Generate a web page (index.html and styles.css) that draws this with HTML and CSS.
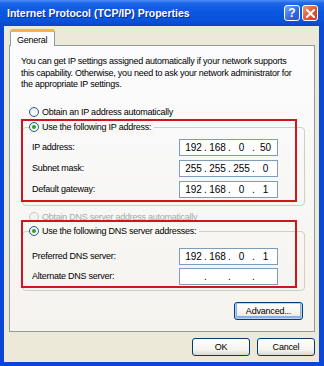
FILE: index.html
```html
<!DOCTYPE html>
<html lang="en">
<head>
  <meta charset="UTF-8">
  <title>Internet Protocol (TCP/IP) Properties</title>
  <link rel="stylesheet" href="styles.css">
</head>
<body>
  <div class="window">
    <div class="titlebar">
      <span class="title">Internet Protocol (TCP/IP) Properties</span>
      <div class="caption-btns">
        <span class="cbtn help">?</span>
        <span class="cbtn close">
          <svg width="9" height="9" viewBox="0 0 9 9"><path d="M1 1 L8 8 M8 1 L1 8" stroke="#fff" stroke-width="2" stroke-linecap="square"/></svg>
        </span>
      </div>
    </div>

    <div class="client">
      <div class="tabs">
        <span class="tab">General</span>
      </div>

      <div class="panel">
        <p class="intro">You can get IP settings assigned automatically if your network supports this capability. Otherwise, you need to ask your network administrator for the appropriate IP settings.</p>

        <div class="radio radio-top"><span class="dot"></span>Obtain an IP address automatically</div>

        <div class="group group-ip">
          <div class="radio legend checked"><span class="dot"></span>Use the following IP address:</div>
          <div class="row">
            <span class="label">IP address:</span>
            <div class="ipbox"><span>192</span><i>.</i><span>168</span><i>.</i><span>0</span><i>.</i><span>50</span></div>
          </div>
          <div class="row">
            <span class="label">Subnet mask:</span>
            <div class="ipbox"><span>255</span><i>.</i><span>255</span><i>.</i><span>255</span><i>.</i><span>0</span></div>
          </div>
          <div class="row">
            <span class="label">Default gateway:</span>
            <div class="ipbox"><span>192</span><i>.</i><span>168</span><i>.</i><span>0</span><i>.</i><span>1</span></div>
          </div>
          <div class="mark mark-ip"></div>
        </div>

        <div class="radio radio-dns disabled"><span class="dot"></span>Obtain DNS server address automatically</div>

        <div class="group group-dns">
          <div class="radio legend checked"><span class="dot"></span>Use the following DNS server addresses:</div>
          <div class="row">
            <span class="label">Preferred DNS server:</span>
            <div class="ipbox"><span>192</span><i>.</i><span>168</span><i>.</i><span>0</span><i>.</i><span>1</span></div>
          </div>
          <div class="row">
            <span class="label">Alternate DNS server:</span>
            <div class="ipbox"><span></span><i>.</i><span></span><i>.</i><span></span><i>.</i><span></span></div>
          </div>
          <div class="mark mark-dns"></div>
        </div>

        <div class="panel-foot">
          <button class="btn btn-adv">Advanced...</button>
        </div>
      </div>

      <div class="dialog-btns">
        <button class="btn btn-dlg">OK</button>
        <button class="btn btn-dlg">Cancel</button>
      </div>
    </div>
  </div>
</body>
</html>
```

FILE: styles.css
```css
* {
  box-sizing: border-box;
}

body {
  margin: 0;
  font-family: "Liberation Sans", Arial, sans-serif;
  font-size: 9px;
  letter-spacing: -0.25px;
  color: #000;
  background: #fff;
}

.window {
  width: 324px;
  height: 366px;
  display: flex;
  flex-direction: column;
  background: #0a47d6;
}

/* title bar */
.titlebar {
  height: 26px;
  display: flex;
  align-items: center;
  justify-content: space-between;
  padding: 0 6px 0 7px;
  background: linear-gradient(#4f8ef5 0%, #1c66e8 12%, #0a58e0 45%, #0a52da 80%, #0a46c8 100%);
}

.title {
  color: #fff;
  font-weight: bold;
  font-size: 10.5px;
  letter-spacing: 0;
  text-shadow: 1px 1px 0 #0a2a8a;
}

.caption-btns {
  display: flex;
  gap: 2px;
}

.cbtn {
  width: 16px;
  height: 16px;
  border: 1px solid #fff;
  border-radius: 3px;
  display: flex;
  align-items: center;
  justify-content: center;
  color: #fff;
  font-weight: bold;
  font-size: 12px;
  letter-spacing: 0;
}

.help {
  background: linear-gradient(135deg, #7aa8fa, #2f67e6 60%, #1f55d6);
}

.close {
  background: linear-gradient(135deg, #f09a78, #e0552e 55%, #c8401e);
}

/* client area */
.client {
  flex: 1;
  margin: 0 5px 4px 4px;
  padding: 3px 4px 5px 5px;
  background: #ece9d8;
  display: flex;
  flex-direction: column;
}

.tabs {
  display: flex;
  padding-left: 1px;
}

.tab {
  height: 17px;
  padding: 2px 7px 0 6px;
  margin-bottom: -1px;
  border: 1px solid #919b9c;
  border-bottom: none;
  border-top: 3px solid #f3b33c;
  border-radius: 3px 3px 0 0;
  background: #fcfcfe;
  position: relative;
  line-height: 12px;
}

.panel {
  height: 287px;
  border: 1px solid #919b9c;
  background: linear-gradient(#fcfcfe, #f4f3ee);
  padding: 10px 10px 0 11px;
  display: flex;
  flex-direction: column;
}

.intro {
  margin: 0;
  line-height: 11.5px;
  width: 276px;
}

/* radios */
.radio {
  display: flex;
  align-items: center;
  height: 14px;
  gap: 3px;
}

.dot {
  width: 10px;
  height: 10px;
  border: 1px solid #2a5a8a;
  border-radius: 50%;
  background: radial-gradient(circle at 60% 60%, #fff, #e4e2d8);
  position: relative;
}

.checked .dot::after {
  content: "";
  position: absolute;
  left: 2px;
  top: 2px;
  width: 4px;
  height: 4px;
  border-radius: 50%;
  background: #2aa22a;
}

.disabled {
  color: #aca899;
}

.disabled .dot {
  border-color: #cac8bb;
  background: #f4f3ee;
}

.radio-top {
  margin: 14px 0 0 8px;
}

.radio-dns {
  margin: 4px 0 0 8px;
}

/* group boxes */
.group {
  position: relative;
  margin-left: 1px;
  width: 283px;
  border: 1px solid #d0d0bf;
  border-radius: 4px;
  padding: 0 0 0 9px;
}

.group-ip {
  margin-top: 8px;
  height: 79px;
}

.group-dns {
  margin-top: 7px;
  height: 60px;
}

.legend {
  margin: -8px 0 0 -3px;
  padding-right: 3px;
  background: #f8f7f3;
  width: max-content;
}

.row {
  display: flex;
  align-items: center;
  justify-content: space-between;
  width: 246px;
  height: 17px;
  margin-top: 4px;
}

.group-ip .legend + .row {
  margin-top: 5px;
}

.group-dns .legend + .row {
  margin-top: 10px;
}

.group-dns .row {
  margin-top: 3px;
}

.ipbox {
  width: 99px;
  height: 17px;
  border: 1px solid #7f9db9;
  background: #fff;
  display: flex;
  align-items: center;
  padding-left: 4px;
  font-size: 10px;
  letter-spacing: 0;
}

.ipbox span {
  width: 19px;
  text-align: center;
}

.ipbox i {
  font-style: normal;
  width: 5px;
  text-align: center;
}

/* red annotation boxes */
.mark {
  position: absolute;
  border: 2px solid #d3141c;
  pointer-events: none;
}

.mark-ip {
  left: -2px;
  right: 7px;
  top: -9px;
  bottom: 3px;
}

.mark-dns {
  left: -2px;
  right: 7px;
  top: -12px;
  bottom: 2px;
}

/* buttons */
.btn {
  font-family: inherit;
  font-size: 9px;
  letter-spacing: -0.2px;
  color: #000;
  height: 18px;
  padding: 0;
  border: 1px solid #003c74;
  border-radius: 3px;
  background: linear-gradient(#fff, #f3f2ec 70%, #dcd8cc);
}

.panel-foot {
  display: flex;
  justify-content: flex-end;
  margin-top: auto;
  padding: 0 1px 11px 0;
}

.btn-adv {
  width: 69px;
  box-shadow: inset 0 0 0 1px #b9d1f6, inset 0 -1px 0 2px #8aaee8;
}

.dialog-btns {
  display: flex;
  justify-content: flex-end;
  gap: 7px;
  margin-top: 6px;
}

.btn-dlg {
  width: 58px;
}
```
